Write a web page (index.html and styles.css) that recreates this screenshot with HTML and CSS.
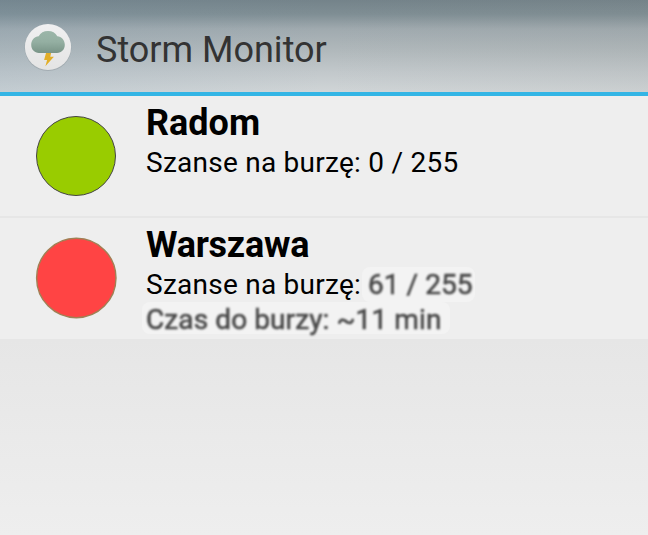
FILE: index.html
```html
<!DOCTYPE html>
<html lang="pl">
<head>
<meta charset="utf-8">
<title>Storm Monitor</title>
<link rel="stylesheet" href="styles.css">
</head>
<body>
<header class="bar">
  <svg class="logo" viewBox="0 0 50 50" aria-hidden="true">
    <defs>
      <linearGradient id="disc" x1="0" y1="0" x2="0" y2="1"><stop offset="0" stop-color="#f0f0f1"/><stop offset="1" stop-color="#e4e4e4"/></linearGradient>
      <linearGradient id="cloud" x1="0" y1="0" x2="0" y2="1"><stop offset="0" stop-color="#9bb6a9"/><stop offset=".5" stop-color="#94afa2"/><stop offset="1" stop-color="#799487"/></linearGradient>
    </defs>
    <circle cx="25" cy="25.600" r="23.400" fill="#7d868b" opacity=".35"/>
    <circle cx="25" cy="25" r="23.100" fill="url(#disc)"/>
    <path d="M23.300 30h5l-1 4.800h3.600L22.400 44.200l1.700-6.200h-3z" fill="#e2ae27"/>
    <path d="M16 31C11.500 31 8.200 27.500 8.200 22.800s3.500-8.300 7.500-8.500c1.800-3.500 5-5.300 9.300-5.300s7.500 1.800 9.300 5.300c4 .2 7.500 3.800 7.500 8.500s-3.300 8.200-7.800 8.200z" fill="url(#cloud)"/>
  </svg>
  <h1 class="title">Storm Monitor</h1>
</header>
<main class="list">
  <section class="row">
    <svg class="status" viewBox="0 0 82 82" aria-hidden="true"><circle class="green" cx="41" cy="41" r="39.500"/></svg>
    <div class="info">
      <h2 class="city">Radom</h2>
      <p class="line">Szanse na burzę: 0 / 255</p>
    </div>
  </section>
  <section class="row row-last">
    <svg class="status" viewBox="0 0 82 82" aria-hidden="true"><circle class="red" cx="41.300" cy="41" r="39.700"/></svg>
    <div class="info">
      <h2 class="city city-long">Warszawa</h2>
      <p class="line chance"><span>Szanse na burzę:</span><span class="patch value"><span class="soft">61 / 255</span></span></p>
      <p class="line patch time"><span class="soft">Czas do burzy: ~11 min</span></p>
    </div>
  </section>
</main>
</body>
</html>
```
FILE: styles.css
```css
* { box-sizing: border-box; }
body {
  margin: 0;
  height: 535px;
  overflow: hidden;
  display: flex;
  flex-direction: column;
  font-family: Roboto, "Liberation Sans", sans-serif;
  color: #000;
  background: linear-gradient(#e6e6e6 339px, #eee 535px);
}
h1, h2, p { margin: 0; }
.bar {
  height: 96px;
  flex: none;
  display: flex;
  align-items: center;
  gap: 23px;
  padding-left: 23px;
  border-bottom: 4px solid #33b5e5;
  background:
    linear-gradient(90deg, rgba(120, 155, 180, .14), rgba(180, 180, 180, 0) 50%, rgba(130, 125, 115, .06)),
    linear-gradient(#74838a 0, #7f8e94 14px, #a0aaaf 29px, #b0b8bb 50px, #c2c8cb 72px, #d0d5d7 92px);
}
.logo { width: 50px; height: 50px; flex: none; margin-top: 2px; }
.title {
  font-size: 36px;
  line-height: 42px;
  font-weight: 400;
  color: #333;
  margin-top: 8px;
}
.list { background: #eee; }
.row {
  display: flex;
  gap: 29px;
  height: 122px;
  padding-left: 35px;
  border-bottom: 2px solid #e6e6e6;
}
.row-last { height: 121px; border-bottom: 0; }
.status { width: 82px; height: 82px; flex: none; margin-top: 19px; }
.green { fill: #9c0; stroke: #444; stroke-width: 1; }
.red { fill: #f44; stroke: #a08055; stroke-width: 1.400; }
.info { padding-top: 6px; }
.city { font-size: 36px; line-height: 42px; font-weight: 700; margin-bottom: 1px; white-space: nowrap; }
.city-long { letter-spacing: -.25px; }
.line { font-size: 28px; line-height: 35px; letter-spacing: .25px; white-space: nowrap; }
.chance { display: flex; }
.patch { background: #f3f3f3; border-radius: 8px; color: #484848; }
.value { padding: 0 2px 0 6px; margin-left: 1px; letter-spacing: .05px; }
.time { width: 308px; height: 32px; margin: 0 0 0 -4px; padding-left: 4px; line-height: 35px; letter-spacing: .1px; }
.soft { display: inline-block; filter: blur(.8px); -webkit-text-stroke: .6px #484848; }
```
